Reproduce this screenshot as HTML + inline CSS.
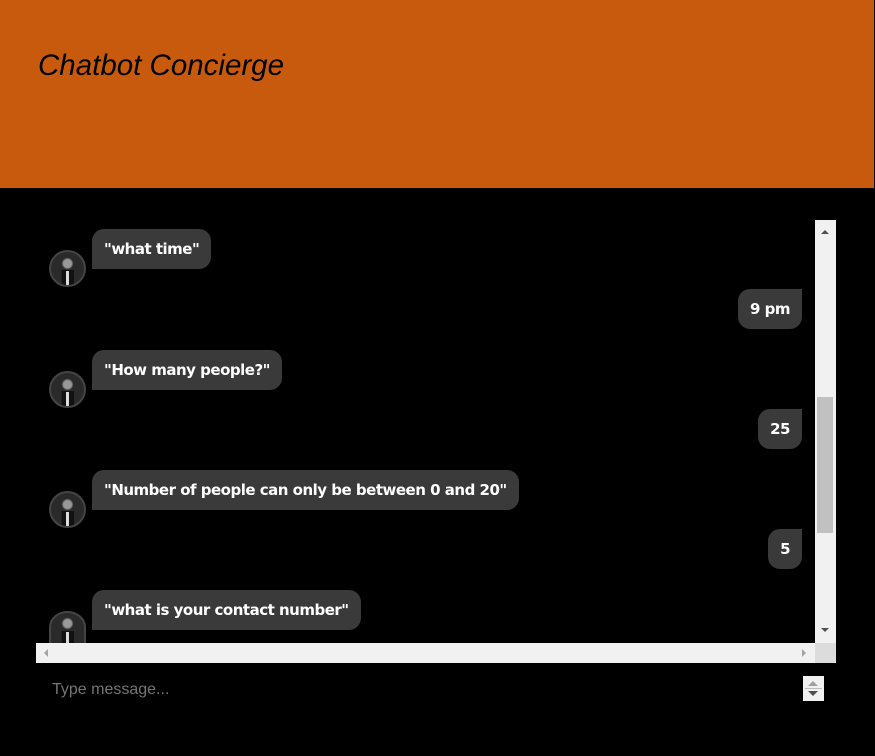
<!DOCTYPE html><html><head><style>
body{margin:0;width:875px;height:756px;background:#000;position:relative;overflow:hidden;font-family:"Liberation Sans",sans-serif}
.hdr{position:absolute;left:0;top:0;width:874px;height:188px;background:#c85a0d}
.hdr h1{position:absolute;left:38px;top:49px;margin:0;font-size:29.5px;font-style:italic;font-weight:normal;color:#000}
.b{position:absolute;height:40px;line-height:40px;background:#3a3a3a;color:#fff;font-family:"DejaVu Sans",sans-serif;font-weight:bold;font-size:15px;padding:0 12px;border-radius:12px;white-space:nowrap;letter-spacing:-0.5px}
.bot{left:92px;border-bottom-left-radius:0}
.usr{right:73px;border-top-right-radius:0}
.av{position:absolute;left:49px;width:33px;height:33px;border-radius:50%;border:2px solid #444;background:radial-gradient(circle at 50% 35%,#999 0 4px,#2a2a2a 6px),#2a2a2a;overflow:hidden}
.av:after{content:"";position:absolute;left:10px;top:18px;width:12px;height:15px;background:#111;border-left:1px solid #222}
.av:before{content:"";position:absolute;left:15px;top:19px;width:3px;height:14px;background:#ddd;z-index:1}
.vs{position:absolute;left:815px;top:220px;width:21px;height:423px;background:#f1f1f1}
.th{position:absolute;left:817px;top:397px;width:16px;height:136px;background:#c1c1c1}
.hs{position:absolute;left:36px;top:643px;width:779px;height:20px;background:#f1f1f1}
.cor{position:absolute;left:815px;top:643px;width:21px;height:20px;background:#dcdcdc}
.tri{position:absolute;width:0;height:0}
</style></head><body>
<div class="hdr"><h1>Chatbot Concierge</h1></div>
<div class="b bot" style="top:229px">"what time"</div><div class="av" style="top:250px"></div>
<div class="b usr" style="top:289px">9 pm</div>
<div class="b bot" style="top:350px">"How many people?"</div><div class="av" style="top:371px"></div>
<div class="b usr" style="top:409px">25</div>
<div class="b bot" style="top:470px">"Number of people can only be between 0 and 20"</div><div class="av" style="top:491px"></div>
<div class="b usr" style="top:529px">5</div>
<div class="b bot" style="top:590px">"what is your contact number"</div><div class="av" style="top:611px;height:30px;border-bottom:none;border-radius:50% 50% 0 0"></div>
<div class="vs"></div><div class="th"></div>
<div class="tri" style="left:821px;top:230px;border:4px solid transparent;border-top:0;border-bottom:4px solid #505050"></div>
<div class="tri" style="left:821px;top:628px;border:4px solid transparent;border-bottom:0;border-top:4px solid #505050"></div>
<div class="hs"></div><div class="cor"></div>
<div class="tri" style="left:44px;top:649px;border:4px solid transparent;border-left:0;border-right:4px solid #a3a3a3"></div>
<div class="tri" style="left:802px;top:649px;border:4px solid transparent;border-right:0;border-left:4px solid #a3a3a3"></div>
<div style="position:absolute;left:52px;top:681px;color:#757575;font-size:16px">Type message...</div>
<div style="position:absolute;left:803px;top:676px;width:21px;height:25px;background:#f1f1f1"></div>
<div class="tri" style="left:808px;top:681px;border:5px solid transparent;border-top:0;border-bottom:5px solid #a0a0a0"></div>
<div style="position:absolute;left:805px;top:688px;width:17px;height:1px;background:#bbb"></div>
<div class="tri" style="left:808px;top:691px;border:5px solid transparent;border-bottom:0;border-top:5px solid #505050"></div>
</body></html>
